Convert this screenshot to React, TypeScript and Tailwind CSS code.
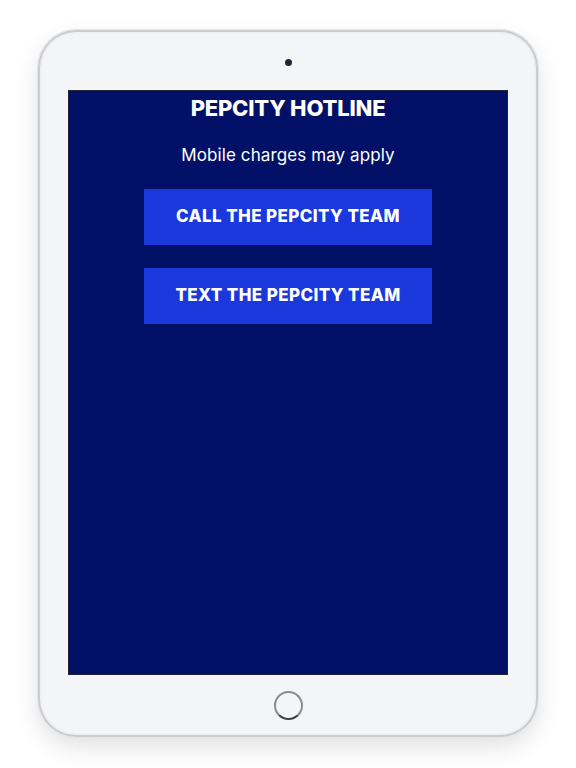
export default function App() {
  return (
    <div className="flex h-[768px] w-full justify-center bg-white pt-[30px] font-['Inter',sans-serif]">
      <div className="flex h-[707px] w-[500px] flex-col items-center rounded-[38px] bg-[#f4f5f7] shadow-[0_0_0_1px_#e4e5e7,inset_0_0_0_2px_#cbcccf,inset_0_0_0_4px_#eef0f2,0_10px_24px_rgba(0,0,0,0.12)]">
        <div className="mt-[29px] h-[7px] w-[7px] rounded-full bg-[#1f2733]" />
        <div className="mt-[24px] flex h-[585px] w-[440px] flex-col items-center border border-[#202436] bg-[#021167]">
          <h1 className="mt-[3px] text-[22px] leading-[28px] font-extrabold tracking-[-0.2px] text-white">
            PEPCITY HOTLINE
          </h1>
          <p className="mt-[21px] text-[17px] leading-[24px] font-normal tracking-[0.1px] text-white">
            Mobile charges may apply
          </p>
          <button
            type="button"
            className="mt-[22px] h-[56px] w-[288px] bg-[#1a38dc] text-[17px] font-extrabold tracking-[0.4px] text-white"
          >
            CALL THE PEPCITY TEAM
          </button>
          <button
            type="button"
            className="mt-[23px] h-[56px] w-[288px] bg-[#1a38dc] text-[17px] font-extrabold tracking-[0.4px] text-white"
          >
            TEXT THE PEPCITY TEAM
          </button>
        </div>
        <div className="mt-[16px] h-[29px] w-[29px] rounded-full border-[2px] border-[#8a8b8e] border-b-[#3e3f42]" />
      </div>
    </div>
  );
}
